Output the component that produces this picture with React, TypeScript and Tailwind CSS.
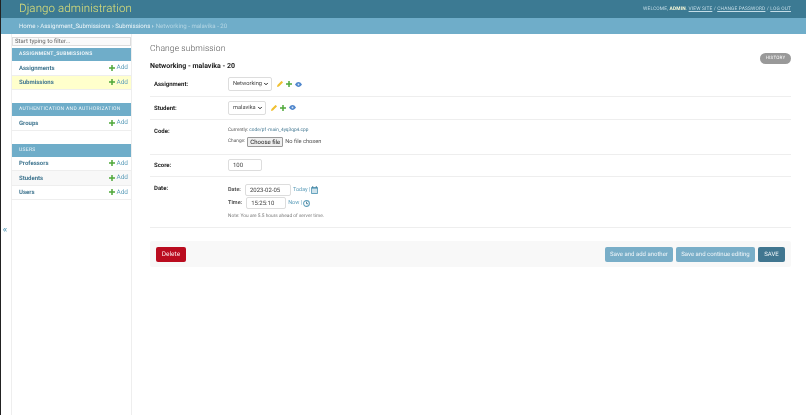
import { ChevronDown } from 'lucide-react'

const groups = [
  { title: 'ASSIGNMENT_SUBMISSIONS', strong: true, rows: ['Assignments', 'Submissions'] },
  { title: 'AUTHENTICATION AND AUTHORIZATION', rows: ['Groups'] },
  { title: 'USERS', rows: ['Professors', 'Students', 'Users'] },
]

function AddLink() {
  return (
    <span className="flex items-center gap-[1px] text-[#5f9fbb] font-normal text-[6.5px]">
      <svg width="6" height="6" viewBox="0 0 8 8">
        <path d="M3 0h2v3h3v2H5v3H3V5H0V3h3z" fill="#4fa83a" />
      </svg>
      <span className="pt-[1px]">Add</span>
    </span>
  )
}

function RelatedIcons() {
  return (
    <span className="flex items-center gap-[3px] ml-[5px]">
      <svg width="6" height="6" viewBox="0 0 8 8">
        <path d="M0 8l.6-2.6L5.6.4a.8.8 0 0 1 1.1 0l.9.9a.8.8 0 0 1 0 1.1L2.6 7.4z" fill="#f0c030" />
      </svg>
      <svg width="6" height="6" viewBox="0 0 8 8">
        <path d="M3 0h2v3h3v2H5v3H3V5H0V3h3z" fill="#4fa83a" />
      </svg>
      <svg width="7" height="5" viewBox="0 0 10 7">
        <path d="M0 3.5C1.5 1.2 3.2 0 5 0s3.5 1.2 5 3.5C8.5 5.8 6.8 7 5 7S1.500 5.800 0 3.500z" fill="#4f86cc" />
        <circle cx="5" cy="3.5" r="1.3" fill="#d6e4f4" />
      </svg>
    </span>
  )
}

function FakeSelect({ label, width }: { label: string; width: string }) {
  return (
    <span className={`flex items-center justify-between shrink-0 h-[14px] pl-[4px] pr-[2px] border border-[#ddd] rounded-[2px] bg-white text-[5.7px] text-[#444] ${width}`}>
      <span className="pt-[1px]">{label}</span>
      <ChevronDown size={6} strokeWidth={4} className="text-[#222] shrink-0" />
    </span>
  )
}

function Row({ label, height, top, children }: { label: string; height: string; top?: boolean; children: React.ReactNode }) {
  return (
    <div className={`flex border-b border-[#eee] px-[4px] ${height} ${top ? 'items-start pt-[7px]' : 'items-center'}`}>
      <span className={`w-[74px] shrink-0 text-[6px] font-bold text-[#222] ${top ? '' : 'pt-[1px]'}`}>{label}</span>
      <div className="flex-1">{children}</div>
    </div>
  )
}

export default function App() {
  return (
    <div className="w-[806px] h-[415px] overflow-hidden bg-white flex flex-col border-l border-[#222] font-['Roboto',sans-serif] text-[#333] [text-rendering:geometricPrecision] blur-[0.45px]">
      <header className="h-[18px] shrink-0 bg-[#3c7a93] flex items-center justify-between pl-[18px] pr-[15px]">
        <span className="text-[11.5px] font-light text-[#e0e278] tracking-[0.1px]">Django administration</span>
        <span className="text-[4.85px] text-[#c4dde7] tracking-[0.15px] pt-[1px]">
          WELCOME, <b className="text-[#fafad8]">ADMIN</b>. <span className="underline">VIEW SITE</span> / <span className="underline">CHANGE PASSWORD</span> / <span className="underline">LOG OUT</span>
        </span>
      </header>
      <nav className="h-[16px] shrink-0 bg-[#6fadc9] flex items-center pl-[18px] pt-[1px] text-[6.1px] text-[#eef6f9]">
        Home › Assignment_Submissions › Submissions › <span className="text-[#b4d6e4] ml-[2px]">Networking - malavika - 20</span>
      </nav>
      <div className="flex flex-1 min-h-0">
        <div className="w-[10px] shrink-0 flex items-center justify-center pt-[13px] text-[9px] font-bold text-[#5f9fbb] relative left-[-1px]">«</div>
        <aside className="w-[121px] shrink-0 border-r border-l border-[#eee] pt-[3px]">
          <div className="h-[9px] border border-[#ddd] mb-[2px] pl-[2px] flex items-center text-[6px] text-[#666] bg-[#fafafa]">
            Start typing to filter...
          </div>
          {groups.map((g) => (
            <div key={g.title} className="mb-[13px]">
              <div className={`h-[13px] bg-[#6fadc9] flex items-center pl-[7px] pt-[1px] text-[5px] tracking-[0.3px] text-[#f0f6f9] ${g.strong ? 'font-bold' : ''}`}>
                {g.title}
              </div>
              {g.rows.map((r) => (
                <div
                  key={r}
                  className={`h-[14.5px] flex items-center justify-between pl-[7px] pr-[3px] text-[6px] font-bold text-[#417690] border-b border-[#eee] ${r === 'Submissions' ? 'bg-[#ffffcc]' : r === 'Students' ? 'bg-[#f8f8f8]' : ''}`}
                >
                  <span className="pt-[1px]">{r}</span>
                  <AddLink />
                </div>
              ))}
            </div>
          ))}
        </aside>
        <main className="flex-1 min-w-0 pl-[18px] pr-[15px]">
          <div className="flex justify-between items-start pt-[8px] h-[24px]">
            <h1 className="pt-[1px] text-[8.5px] font-light text-[#555] leading-[12px] tracking-[0.1px]">Change submission</h1>
            <span className="mt-[11px] h-[11px] w-[31px] rounded-full bg-[#999] pt-[1.5px] text-white text-[4.5px] flex items-center justify-center tracking-[0.2px]">
              HISTORY
            </span>
          </div>
          <h2 className="pt-[1px] text-[7px] font-bold text-[#222] leading-[10px] mb-[1px] h-[14px] flex items-center">Networking - malavika - 20</h2>
          <Row label="Assignment:" height="h-[23.5px]">
            <span className="flex items-center">
              <FakeSelect label="Networking" width="w-[44px]" />
              <RelatedIcons />
            </span>
          </Row>
          <Row label="Student:" height="h-[23px]">
            <span className="flex items-center">
              <FakeSelect label="malavika" width="w-[38px]" />
              <RelatedIcons />
            </span>
          </Row>
          <Row label="Code:" height="h-[35px]" top>
            <div className="text-[4.75px] leading-[6px] mt-[1px] text-[#555]">
              Currently: <span className="text-[#417690]">code/p1-main_4yq3qp4.cpp</span>
            </div>
            <div className="flex items-center text-[4.75px] text-[#555] mt-[3px]">
              Change:
              <span className="ml-[2px] h-[10px] w-[36px] shrink-0 flex items-center justify-center pt-[1px] bg-[#efefef] border border-[#999] rounded-[1px] text-[6px] text-[#111]">Choose file</span>
              <span className="ml-[2px] pt-[1px] text-[5.7px] text-[#555]">No file chosen</span>
            </div>
          </Row>
          <Row label="Score:" height="h-[22.5px]">
            <span className="flex items-center h-[12px] w-[34px] border border-[#ddd] rounded-[2px] pl-[4px] pt-[1px] text-[6px] text-[#444]">100</span>
          </Row>
          <Row label="Date:" height="h-[51px]" top>
            <div className="flex items-center text-[5.5px] font-bold text-[#555]">
              <span className="pt-[1px]">Date:</span>
              <span className="ml-[4px] flex items-center h-[12px] w-[46px] border border-[#ddd] rounded-[2px] pl-[4px] pt-[1px] text-[6px] font-normal text-[#444]">2023-02-05</span>
              <span className="ml-[2px] pt-[1px] font-normal text-[#5f9fbb] text-[5.5px]">Today |</span>
              <svg width="7" height="8" viewBox="0 0 8 9" className="ml-[1px]">
                <rect x="0" y="1" width="8" height="8" rx="1" fill="#5f9fbb" />
                <rect x="1" y="3" width="6" height="5" fill="#cfe3ec" />
                <rect x="1.5" y="0" width="1" height="2" fill="#417690" />
                <rect x="5.5" y="0" width="1" height="2" fill="#417690" />
              </svg>
            </div>
            <div className="flex items-center text-[5.5px] font-bold text-[#555] mt-[1px]">
              <span className="pt-[1px]">Time:</span>
              <span className="ml-[4px] flex items-center h-[12px] w-[40px] border border-[#ddd] rounded-[2px] pl-[4px] pt-[1px] text-[6px] font-normal text-[#444]">15:25:10</span>
              <span className="ml-[2px] pt-[1px] font-normal text-[#5f9fbb] text-[5.5px]">Now |</span>
              <svg width="7" height="7" viewBox="0 0 8 8" className="ml-[1px]">
                <circle cx="4" cy="4" r="3.3" fill="none" stroke="#5f9fbb" strokeWidth="1.2" />
                <path d="M4 2v2.3h1.8" fill="none" stroke="#417690" strokeWidth="1" />
              </svg>
            </div>
            <div className="text-[4.8px] text-[#777] mt-[4px]">Note: You are 5.5 hours ahead of server time.</div>
          </Row>
          <div className="mt-[13px] h-[26px] bg-[#f8f8f8] rounded-[2px] flex items-center pl-[6px] pr-[6px]">
            <span className="h-[15px] w-[30px] rounded-[2px] bg-[#ba0c1f] pt-[1px] text-[#fbeaec] text-[6.5px] flex items-center justify-center">Delete</span>
            <span className="ml-auto h-[15px] w-[68px] rounded-[2px] bg-[#79aec8] pt-[1px] text-[#f0f6f9] text-[6px] flex items-center justify-center">Save and add another</span>
            <span className="ml-[3px] h-[15px] w-[79px] rounded-[2px] bg-[#79aec8] pt-[1px] text-[#f0f6f9] text-[6px] flex items-center justify-center">Save and continue editing</span>
            <span className="ml-[3px] h-[15px] w-[27px] rounded-[2px] bg-[#417690] pt-[1px] text-[#f0f6f9] text-[6px] flex items-center justify-center">SAVE</span>
          </div>
        </main>
      </div>
    </div>
  )
}
